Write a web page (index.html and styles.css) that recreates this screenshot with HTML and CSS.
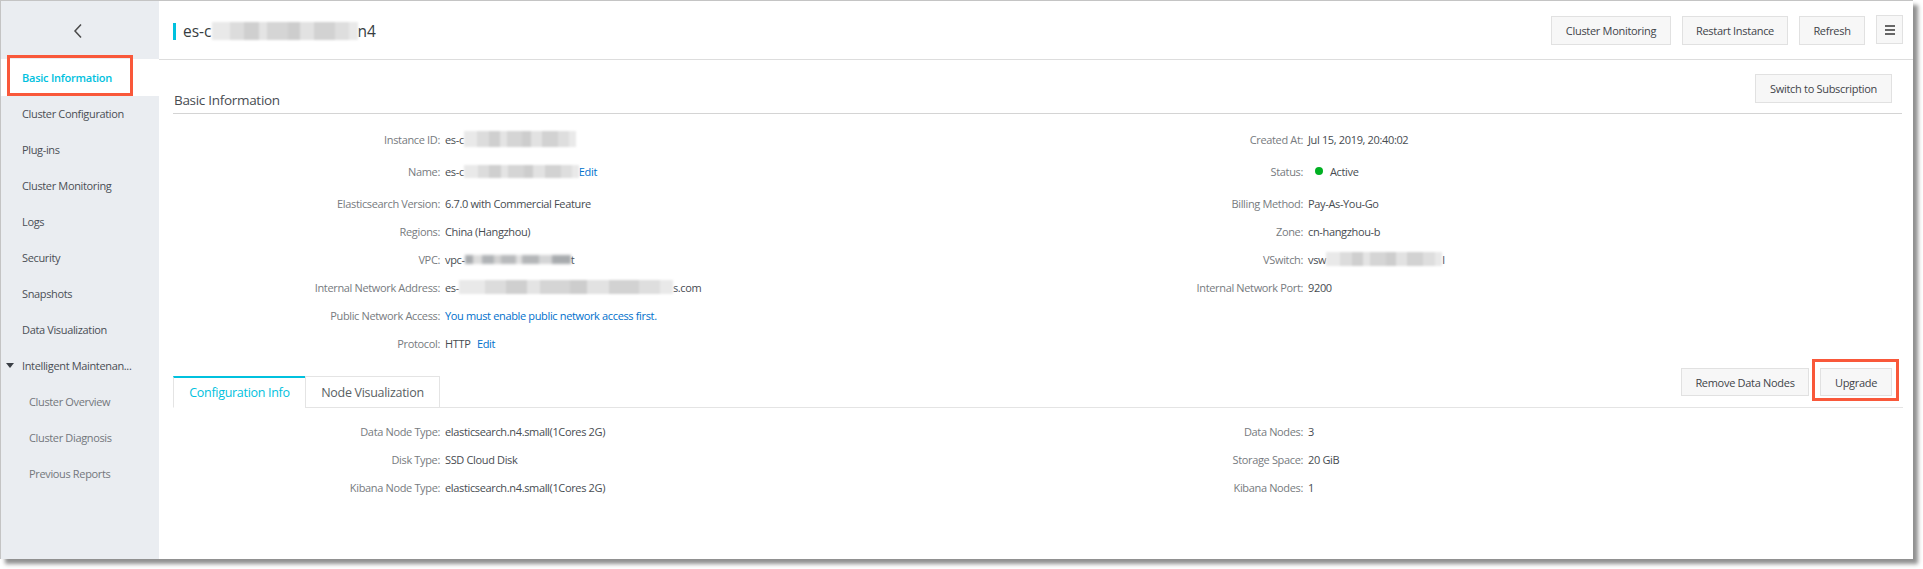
FILE: index.html
```html
<!DOCTYPE html>
<html lang="en">
<head>
<meta charset="utf-8">
<title>Basic Information</title>
<link rel="stylesheet" href="styles.css">
</head>
<body>
<div class="window">
  <aside class="sidebar">
    <div class="back">
      <svg width="12" height="16" viewBox="0 0 12 16"><path d="M9 1.5 3 8l6 6.500" fill="none" stroke="#4a4a4a" stroke-width="1.500"/></svg>
    </div>
    <nav class="nav">
      <a class="nav-item active">Basic Information<span class="annot annot-nav"></span></a>
      <a class="nav-item">Cluster Configuration</a>
      <a class="nav-item">Plug-ins</a>
      <a class="nav-item">Cluster Monitoring</a>
      <a class="nav-item">Logs</a>
      <a class="nav-item">Security</a>
      <a class="nav-item">Snapshots</a>
      <a class="nav-item">Data Visualization</a>
      <a class="nav-item group"><span class="caret"></span>Intelligent Maintenan...</a>
      <a class="nav-item sub">Cluster Overview</a>
      <a class="nav-item sub">Cluster Diagnosis</a>
      <a class="nav-item sub">Previous Reports</a>
    </nav>
  </aside>
  <main class="main">
    <header class="topbar">
      <div class="title"><span class="title-mark"></span><span>es-c</span><span class="mosaic m-title"></span><span>n4</span></div>
      <div class="actions">
        <button class="btn b-monitor">Cluster Monitoring</button>
        <button class="btn b-restart">Restart Instance</button>
        <button class="btn b-refresh">Refresh</button>
        <button class="btn menu"><span></span><span></span><span></span></button>
      </div>
    </header>
    <section class="content">
      <div class="section-head">
        <h2>Basic Information</h2>
        <button class="btn b-switch">Switch to Subscription</button>
      </div>
      <div class="info">
        <div class="col">
          <div class="row tall"><span class="k">Instance ID:</span><span class="v">es-c<span class="mosaic m-id"></span></span></div>
          <div class="row tall"><span class="k">Name:</span><span class="v">es-c<span class="mosaic m-name"></span><a class="link">Edit</a></span></div>
          <div class="row"><span class="k">Elasticsearch Version:</span><span class="v">6.7.0 with Commercial Feature</span></div>
          <div class="row"><span class="k">Regions:</span><span class="v">China (Hangzhou)</span></div>
          <div class="row"><span class="k">VPC:</span><span class="v">vpc-<span class="mosaic m-vpc"></span>t</span></div>
          <div class="row"><span class="k">Internal Network Address:</span><span class="v">es-<span class="mosaic m-addr"></span>s.com</span></div>
          <div class="row"><span class="k">Public Network Access:</span><span class="v"><a class="link">You must enable public network access first.</a></span></div>
          <div class="row"><span class="k">Protocol:</span><span class="v">HTTP <a class="link edit">Edit</a></span></div>
        </div>
        <div class="col">
          <div class="row tall"><span class="k">Created At:</span><span class="v">Jul 15, 2019, 20:40:02</span></div>
          <div class="row tall"><span class="k">Status:</span><span class="v"><span class="dot"></span>Active</span></div>
          <div class="row"><span class="k">Billing Method:</span><span class="v">Pay-As-You-Go</span></div>
          <div class="row"><span class="k">Zone:</span><span class="v">cn-hangzhou-b</span></div>
          <div class="row"><span class="k">VSwitch:</span><span class="v">vsw<span class="mosaic m-vsw"></span>l</span></div>
          <div class="row"><span class="k">Internal Network Port:</span><span class="v">9200</span></div>
        </div>
      </div>
      <div class="tabbar">
        <div class="tabs">
          <div class="tab current">Configuration Info</div>
          <div class="tab">Node Visualization</div>
        </div>
        <div class="tab-actions">
          <button class="btn b-remove">Remove Data Nodes</button>
          <button class="btn b-upgrade">Upgrade<span class="annot annot-upgrade"></span></button>
        </div>
      </div>
      <div class="info config">
        <div class="col">
          <div class="row"><span class="k">Data Node Type:</span><span class="v">elasticsearch.n4.small(1Cores 2G)</span></div>
          <div class="row"><span class="k">Disk Type:</span><span class="v">SSD Cloud Disk</span></div>
          <div class="row"><span class="k">Kibana Node Type:</span><span class="v">elasticsearch.n4.small(1Cores 2G)</span></div>
        </div>
        <div class="col">
          <div class="row"><span class="k">Data Nodes:</span><span class="v">3</span></div>
          <div class="row"><span class="k">Storage Space:</span><span class="v">20 GiB</span></div>
          <div class="row"><span class="k">Kibana Nodes:</span><span class="v">1</span></div>
        </div>
      </div>
    </section>
  </main>
</div>
</body>
</html>
```
FILE: styles.css
```css
* { box-sizing: border-box; }
html, body { margin: 0; padding: 0; background: #fff; }
body {
  width: 1923px;
  height: 569px;
  overflow: hidden;
  font-family: "Open Sans", "Liberation Sans", sans-serif;
  font-size: 11px;
  color: #3a3f45;
}
.window {
  display: flex;
  width: 1913px;
  height: 559px;
  border-top: 1px solid #c4c4c4;
  border-left: 1px solid #c4c4c4;
  background: #fff;
  box-shadow: 5px 5px 4px rgba(70, 70, 70, .6);
}
.sidebar { width: 158px; background: #eaedf1; flex: none; }
.back { height: 58px; display: flex; align-items: center; justify-content: center; padding: 0 4px 0 0; }
.back svg { margin-top: 1px; }
.nav { display: flex; flex-direction: column; }
.nav-item {
  position: relative;
  height: 36px;
  padding: 0 0 2px 21px;
  display: flex;
  align-items: center;
  white-space: nowrap;
  letter-spacing: -.35px;
  color: #4a4f55;
}
.nav-item.active { height: 37px; background: #fff; color: #00c1de; font-weight: 600; padding-top: 1px; letter-spacing: -.24px; }
.nav-item.group { padding-left: 4px; }
.nav-item.sub { padding-left: 28px; color: #73777c; }
.caret {
  width: 0; height: 0;
  margin-right: 8px;
  margin-left: 1px;
  border-left: 4.500px solid transparent;
  border-right: 4.500px solid transparent;
  border-top: 5px solid #3a3f45;
}
.annot { position: absolute; border: 3px solid #f9583a; pointer-events: none; }
.annot-nav { left: 6px; top: -4px; width: 126px; height: 41px; }
.annot-upgrade { left: -9px; top: -10px; width: 87px; height: 42px; }

.main { flex: 1; min-width: 0; display: flex; flex-direction: column; }
.topbar {
  height: 59px;
  flex: none;
  padding: 0 10px 0 14px;
  display: flex;
  align-items: center;
  justify-content: space-between;
  border-bottom: 1px solid #ddd;
}
.title { display: flex; align-items: center; font-size: 15.500px; color: #373d41; margin-top: 2px; }
.title-mark { width: 3px; height: 17px; background: #00c1de; margin-right: 7px; }
.actions { display: flex; align-items: flex-start; gap: 11px; margin-top: 1px; }
.btn {
  position: relative;
  display: inline-flex;
  align-items: center;
  justify-content: center;
  height: 29px;
  padding: 0;
  background: #f7f7f7;
  border: 1px solid #e1e1e1;
  font: inherit;
  letter-spacing: -.3px;
  color: #3f4449;
}
.b-monitor { width: 120px; }
.b-restart { width: 106px; }
.b-refresh { width: 66px; }
.menu { width: 27px; flex-direction: column; gap: 2px; margin-top: -1px; }
.menu span { width: 10px; height: 2px; background: #666; }
.b-switch { width: 137px; height: 29px; margin: 0 10px 10px 0; }

.content { flex: 1; padding: 0 11px 0 14px; }
.section-head {
  height: 54px;
  display: flex;
  align-items: flex-end;
  justify-content: space-between;
  border-bottom: 1px solid #d4d4d4;
}
h2 { margin: 0 0 3px 1px; font-size: 13.500px; font-weight: 400; letter-spacing: -.3px; color: #484d52; line-height: 20px; }
.info { display: grid; grid-template-columns: 863px 1fr; margin-top: 12px; }
.row { height: 28px; padding-bottom: 2px; display: flex; align-items: center; white-space: nowrap; letter-spacing: -.35px; }
.row.tall { margin-bottom: 4px; }
.k { width: 267px; flex: none; text-align: right; color: #777b80; }
.v { display: flex; align-items: center; margin-left: 5px; color: #474c51; white-space: pre; }
.link { color: #0070cc; }
.edit { margin-left: 4px; }
.dot { width: 8px; height: 8px; border-radius: 50%; background: #00b022; margin: 0 7px; }
.mosaic {
  display: inline-block;
  height: 16px;
  filter: blur(1.2px);
  background-image: linear-gradient(90deg,#e9e9e9 0 12%,#dcdcdc 12% 22%,#cfcfcf 22% 32%,#e4e4e4 32% 38%,#d5d5d5 38% 52%,#cdcdcd 52% 60%,#e2e2e2 60% 70%,#d2d2d2 70% 84%,#dedede 84% 94%,#e9e9e9 94%);
}
.m-title { width: 146px; height: 18px; }
.m-id { width: 112px; }
.m-name { width: 115px; height: 13px; }
.m-vpc { width: 106px; height: 9px; filter: blur(1.5px); background-image: linear-gradient(90deg,#a8abae 0 8%,#dcdcdc 8% 16%,#b0b3b6 16% 27%,#d2d2d2 27% 34%,#b8babc 34% 48%,#e0e0e0 48% 54%,#b4b6b8 54% 70%,#d4d5d6 70% 82%,#a8abae 82%); }
.m-addr { width: 214px; height: 14px; }
.m-vsw { width: 116px; height: 14px; }

.tabbar {
  height: 40px;
  margin-top: 10px;
  margin-right: -1px;
  display: flex;
  justify-content: space-between;
  align-items: flex-start;
  border-bottom: 1px solid #e4e4e4;
}
.tabs { display: flex; align-self: flex-end; margin-bottom: -1px; }
.tab {
  width: 135px;
  height: 32px;
  border: 1px solid #e4e4e4;
  display: flex;
  align-items: center;
  justify-content: center;
  font-size: 12.500px;
  letter-spacing: -.3px;
  color: #5a5f64;
}
.tab.current {
  width: 132px;
  border-top: 2px solid #00c1de;
  border-right: 0;
  border-bottom-color: #fff;
  color: #00c1de;
}
.tab-actions { display: flex; gap: 11px; padding-right: 11px; }
.b-remove { width: 128px; height: 28px; }
.b-upgrade { width: 72px; height: 28px; }
.info.config { margin-top: 10px; }
```
